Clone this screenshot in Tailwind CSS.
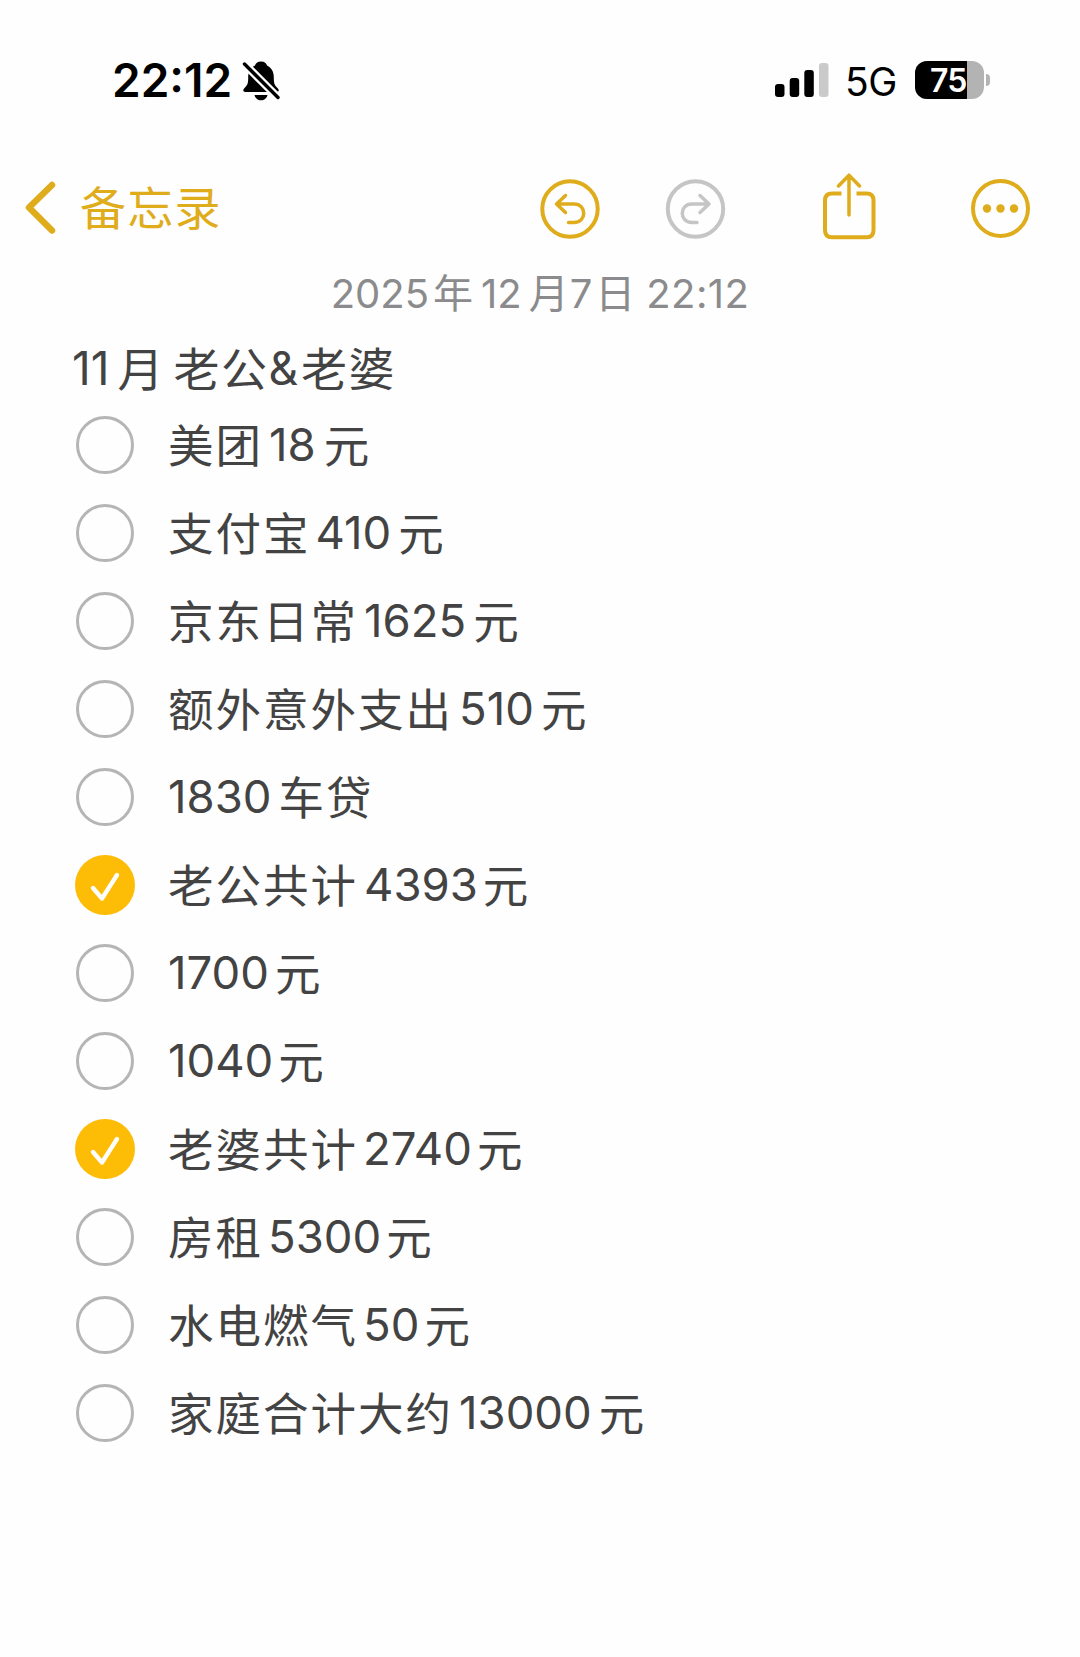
<!DOCTYPE html>
<html lang="zh-CN">
<head>
  <meta charset="UTF-8" />
  <title>备忘录</title>
  <script src="https://cdn.jsdelivr.net/npm/@tailwindcss/browser@4"></script>
</head>
<body class="w-[1080px] h-[1657px] overflow-hidden bg-[#fefefe] font-['Inter','Noto_Sans_CJK_SC',sans-serif]">

  <!-- 状态栏 -->
  <header class="h-[160px] flex items-center justify-between pl-[112px] pr-[90px]">
    <div class="flex items-center">
      <span class="w-[129px] text-[46px] leading-[46px] font-semibold text-black whitespace-nowrap">22:12</span>
      <svg class="w-[40px] h-[44px]" viewBox="0 0 40 44">
        <path d="M20 3.500c-3.500 0-5.500 2-6 4C9 10 7.200 14 7.200 19.500c0 6-.700 7.500-3.700 10.500-2 2-1.500 4 1 4h31c2.500 0 3-2 1-4-3-3-3.700-4.500-3.700-10.500 0-5.500-1.800-9.500-6.800-12C25.500 5.500 23.500 3.500 20 3.500z" fill="#000" />
        <path d="M3.500 6L37 39.500" stroke="#fefefe" stroke-width="8" stroke-linecap="round" />
        <path d="M13.500 37h13c-.700 3.200-3.200 5.300-6.500 5.300s-5.800-2.100-6.500-5.300z" fill="#000" />
        <path d="M3.500 6L37 39.500" stroke="#000" stroke-width="3.400" stroke-linecap="round" />
      </svg>
    </div>
    <div class="flex items-center">
      <svg class="w-[54px] h-[34px]" viewBox="0 0 54 34">
        <rect x="0" y="21" width="9.500" height="13" rx="3" />
        <rect x="14.700" y="15" width="9.500" height="19" rx="3" />
        <rect x="29.300" y="7" width="9.500" height="27" rx="3" />
        <rect x="44" y="0" width="9.500" height="34" rx="3" fill="#cacaca" />
      </svg>
      <span class="w-[70px] ml-[16px] text-[39px] leading-[38px] pt-[3px] tracking-[-0.500px] text-black">5G</span>
      <div class="relative w-[69px] h-[38px] rounded-[12px] overflow-hidden bg-[#b3b3b3]">
        <div class="w-[52px] h-full bg-black"></div>
        <span class="absolute left-[15px] top-[1px] text-[32px] leading-[38px] font-semibold text-white tracking-[-1px]">75</span>
      </div>
      <div class="ml-[2px] w-[4px] h-[12px] rounded-r-full bg-[#b3b3b3]"></div>
    </div>
  </header>

  <!-- 导航栏 -->
  <nav class="h-[98px] flex items-center text-[#dfac1b]">
    <svg class="w-[34px] h-[56px] ml-[24px]" viewBox="0 0 34 56" fill="none" stroke="currentColor" stroke-width="6.500" stroke-linecap="round" stroke-linejoin="round">
      <path d="M28 4L5 26.500L28 49.500" />
    </svg>
    <span class="w-[458px] ml-[22px] pb-[2px] text-[46px] leading-[60px] tracking-[1.300px]">备忘录</span>
    <svg class="w-[64px] h-[64px]" viewBox="0 0 64 64" fill="none" stroke="currentColor" stroke-width="3.500" stroke-linecap="round" stroke-linejoin="round">
      <circle cx="32" cy="32" r="27.700" stroke-width="4" />
      <path d="M27.500 18.500L18.500 27L27.500 35.500M19.500 27H36C49 27 49 45.500 36 45.500H30.500" />
    </svg>
    <svg class="w-[64px] h-[64px] ml-[61px] text-[#c5c5c5]" viewBox="0 0 64 64" fill="none" stroke="currentColor" stroke-width="3.500" stroke-linecap="round" stroke-linejoin="round">
      <circle cx="32.500" cy="32" r="27.700" stroke-width="4" />
      <path d="M37 18.500L46 27L37 35.500M45 27H29C16 27 16 45.500 29 45.500H34" />
    </svg>
    <svg class="w-[56px] h-[72px] ml-[94px]" viewBox="0 0 56 72" fill="none" stroke="currentColor" stroke-width="4">
      <path d="M20.500 20.500H11Q4 20.500 4 27.500V57.200Q4 64.200 11 64.200H45.500Q52.500 64.200 52.500 57.200V27.500Q52.500 20.500 45.500 20.500H35.500" />
      <path d="M28 42V3M17.500 13L28 2.200L38.500 13" stroke-width="3.500" stroke-linecap="round" stroke-linejoin="round" />
    </svg>
    <svg class="w-[64px] h-[64px] ml-[91px]" viewBox="0 0 64 64" fill="currentColor">
      <circle cx="32.500" cy="31.500" r="27.500" fill="none" stroke="currentColor" stroke-width="4" />
      <circle cx="19" cy="31.500" r="4.200" />
      <circle cx="32.500" cy="31.500" r="4.200" />
      <circle cx="46" cy="31.500" r="4.200" />
    </svg>
  </nav>

  <!-- 日期 -->
  <p class="h-[72px] flex items-center justify-center text-[40px] leading-[60px] text-[#8b8b8d] whitespace-nowrap">
    <span>2025</span><span class="ml-[4px] mr-[8px]">年</span><span>12</span><span class="ml-[7px] mr-[1px]">月</span><span>7</span><span class="ml-[3px] mr-[11px]">日</span><span class="tracking-[0.400px]">22:12</span>
  </p>

  <!-- 标题 -->
  <h1 class="h-[71px] pl-[72px] pt-[5px] flex items-center text-[46px] leading-[60px] font-normal text-[#434343] whitespace-nowrap">
    <span>11</span><span class="ml-[8px] mr-[10px] pt-[1px]">月</span><span class="tracking-[1.500px] pt-[1px]">老公</span><span class="mr-[3px]">&amp;</span><span class="tracking-[1.500px] pt-[1px]">老婆</span>
  </h1>

  <!-- 清单 -->
  <ul class="text-[45.500px] leading-[60px] text-[#434343] whitespace-nowrap">
    <li class="h-[88px] flex items-center pl-[76px]">
      <span class="size-[58px] mr-[34px] rounded-full border-[3px] border-[#b5b5b5]"></span>
      <span class="pt-[3px] tracking-[2px]">美团</span><span class="ml-[6px] mr-[8px]">18</span><span class="pt-[3px]">元</span>
    </li>
    <li class="h-[88px] flex items-center pl-[76px]">
      <span class="size-[58px] mr-[34px] rounded-full border-[3px] border-[#b5b5b5]"></span>
      <span class="pt-[3px] tracking-[2px]">支付宝</span><span class="ml-[5px] mr-[7px]">410</span><span class="pt-[3px]">元</span>
    </li>
    <li class="h-[88px] flex items-center pl-[76px]">
      <span class="size-[58px] mr-[34px] rounded-full border-[3px] border-[#b5b5b5]"></span>
      <span class="pt-[3px] tracking-[2px]">京东日常</span><span class="ml-[6px] mr-[7px]">1625</span><span class="pt-[3px]">元</span>
    </li>
    <li class="h-[88px] flex items-center pl-[76px]">
      <span class="size-[58px] mr-[34px] rounded-full border-[3px] border-[#b5b5b5]"></span>
      <span class="pt-[3px] tracking-[2px]">额外意外支出</span><span class="ml-[6px] mr-[7px]">510</span><span class="pt-[3px]">元</span>
    </li>
    <li class="h-[88px] flex items-center pl-[76px]">
      <span class="size-[58px] mr-[34px] rounded-full border-[3px] border-[#b5b5b5]"></span>
      <span class="mr-[7px]">1830</span><span class="pt-[3px] tracking-[2px]">车贷</span>
    </li>
    <li class="h-[88px] flex items-center pl-[75px]">
      <svg class="size-[60px] mr-[33px]" viewBox="0 0 60 60">
        <circle cx="30" cy="30" r="30" fill="#fdbc05" />
        <path d="M18 33L27 43.500L42 20" fill="none" stroke="#fff" stroke-width="4.300" stroke-linecap="round" stroke-linejoin="round" />
      </svg>
      <span class="pt-[3px] tracking-[2px]">老公共计</span><span class="ml-[6px] mr-[5px]">4393</span><span class="pt-[3px]">元</span>
    </li>
    <li class="h-[88px] flex items-center pl-[76px]">
      <span class="size-[58px] mr-[34px] rounded-full border-[3px] border-[#b5b5b5]"></span>
      <span class="mr-[6px]">1700</span><span class="pt-[3px]">元</span>
    </li>
    <li class="h-[88px] flex items-center pl-[76px]">
      <span class="size-[58px] mr-[34px] rounded-full border-[3px] border-[#b5b5b5]"></span>
      <span class="mr-[5px]">1040</span><span class="pt-[3px]">元</span>
    </li>
    <li class="h-[88px] flex items-center pl-[75px]">
      <svg class="size-[60px] mr-[33px]" viewBox="0 0 60 60">
        <circle cx="30" cy="30" r="30" fill="#fdbc05" />
        <path d="M18 33L27 43.500L42 20" fill="none" stroke="#fff" stroke-width="4.300" stroke-linecap="round" stroke-linejoin="round" />
      </svg>
      <span class="pt-[3px] tracking-[2px]">老婆共计</span><span class="ml-[5px] mr-[5px]">2740</span><span class="pt-[3px]">元</span>
    </li>
    <li class="h-[88px] flex items-center pl-[76px]">
      <span class="size-[58px] mr-[34px] rounded-full border-[3px] border-[#b5b5b5]"></span>
      <span class="pt-[3px] tracking-[2px]">房租</span><span class="ml-[5px] mr-[5px]">5300</span><span class="pt-[3px]">元</span>
    </li>
    <li class="h-[88px] flex items-center pl-[76px]">
      <span class="size-[58px] mr-[34px] rounded-full border-[3px] border-[#b5b5b5]"></span>
      <span class="pt-[3px] tracking-[2px]">水电燃气</span><span class="mx-[5px]">50</span><span class="pt-[3px]">元</span>
    </li>
    <li class="h-[88px] flex items-center pl-[76px]">
      <span class="size-[58px] mr-[34px] rounded-full border-[3px] border-[#b5b5b5]"></span>
      <span class="pt-[3px] tracking-[2px]">家庭合计大约</span><span class="ml-[6px] mr-[7px]">13000</span><span class="pt-[3px]">元</span>
    </li>
  </ul>

</body>
</html>
